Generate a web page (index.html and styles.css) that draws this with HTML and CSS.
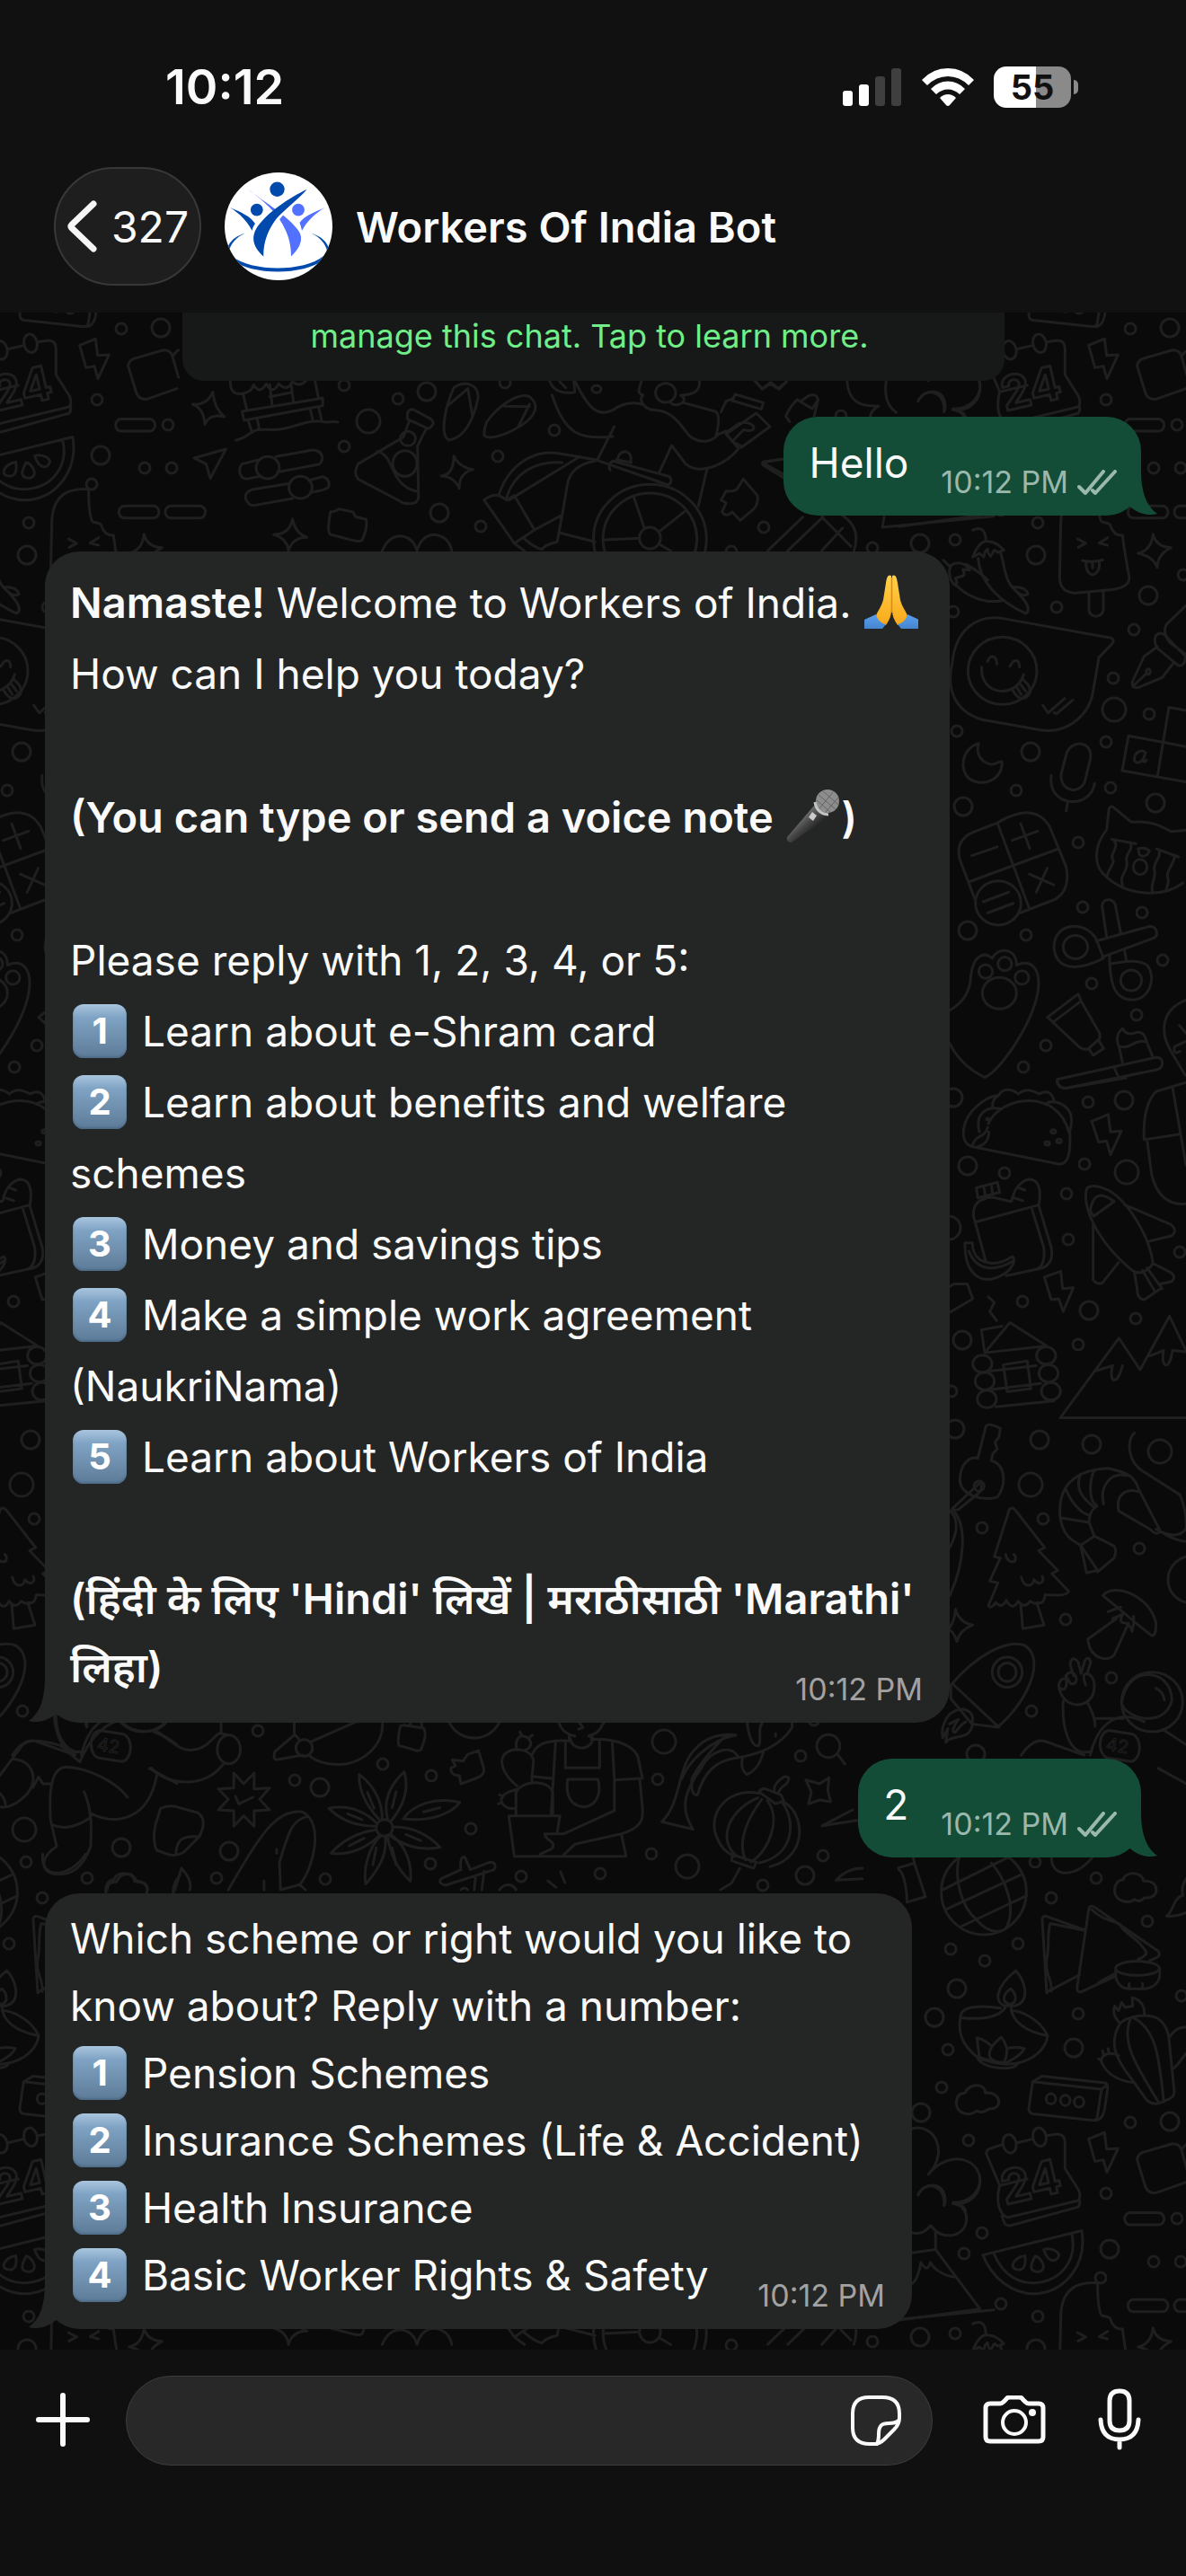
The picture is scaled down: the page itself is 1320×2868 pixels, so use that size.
FILE: index.html
```html
<!DOCTYPE html>
<html lang="en">
<head>
<meta charset="utf-8">
<meta name="viewport" content="width=device-width, initial-scale=1">
<title>Workers Of India Bot</title>
<link rel="stylesheet" href="styles.css">
</head>
<body>
<div class="app">
  <header class="top">
    <div class="status">
      <time class="clock">10:12</time>
      <div class="indicators">
        <svg class="signal" width="66" height="42" viewBox="0 0 66 42" role="img" aria-label="Signal 2 of 4">
          <g fill="#fff"><rect x="0" y="25" width="11" height="17" rx="3"/><rect x="18" y="18" width="11" height="24" rx="3"/></g>
          <g fill="#3f3f3f"><rect x="36" y="9" width="11" height="33" rx="3"/><rect x="54" y="0" width="11" height="42" rx="3"/></g>
        </svg>
        <svg class="wifi" width="58" height="42" viewBox="0 0 58 42" role="img" aria-label="Wi-Fi" fill="#fff">
          <path d="M0 13 Q12 0 29 0 T58 13 L52 19 Q42 9 29 9 T6 19Z"/>
          <path d="M10 23 Q18 14.500 29 14.500 T48 23 L42 29 Q36 23.500 29 23.500 T16 29Z"/>
          <path d="M20 33 Q24 29 29 29 T38 33 L31 41 Q29 43 27 41Z"/>
        </svg>
        <div class="battery"><span class="battery-level">55</span><span class="battery-nub"></span></div>
      </div>
    </div>
    <div class="contact">
      <button class="back" type="button" aria-label="Back, 327 unread">
        <svg width="34" height="58" viewBox="0 0 34 58" fill="none" stroke="#f5f5f5" stroke-width="7" stroke-linecap="round" stroke-linejoin="round"><path d="M30 4 6 27 Q4 29 6 31 L30 54"/></svg>
        <span>327</span>
      </button>
      <svg class="avatar" width="120" height="120" viewBox="0 0 120 120" role="img" aria-label="Workers of India logo">
        <clipPath id="disc"><circle cx="60" cy="60" r="60"/></clipPath>
        <g clip-path="url(#disc)">
          <rect width="120" height="120" fill="#fff"/>
          <path fill="#5271ff" d="M25.700 18.700 C46 34 76 52 84 68 C88 78 80 88 74 93.500 C74 78 70 66 61 52 C52 39 38 27 25.700 18.700Z"/>
          <path fill="#fff" d="M91.700 20.500 C76 38 62 48 58 58 L50 56 C60 40 75 28 91.700 18.700Z"/>
          <path fill="#004aad" d="M91.700 18.700 C72 28 45 46 35 63 C28 76 35 86 43.300 93.500 C43 78 48 64 58 51 C68 40 82 30 91.700 18.700Z"/>
          <path fill="#004aad" d="M6 39 C18 44 29 49 34 57 C32 60 31 62 30.500 65 C26 55 17 46 6 39Z"/>
          <path fill="#5271ff" d="M112 39 C100 44 88 49 83.500 56 C85 60 85.500 62 86 65 C91 55 100 46 112 39Z"/>
          <circle cx="58.500" cy="18.700" r="8.200" fill="#004aad"/>
          <circle cx="35.800" cy="41.700" r="6.900" fill="#004aad"/>
          <circle cx="82" cy="41.700" r="6.900" fill="#5271ff"/>
          <path fill="#004aad" d="M23 67.500 C12 71 4 77 2 88 L5 87 C7 79 13 72 23 67.500Z"/>
          <path fill="#004aad" d="M96 67.500 C107 71 115 77 117 88 L114 87 C112 79 106 72 96 67.500Z"/>
          <path fill="#004aad" d="M8 93 C30 111 88 111 110 93 L110 97 C88 115 30 115 8 97Z"/>
        </g>
      </svg>
      <h1 class="title">Workers Of India Bot</h1>
    </div>
  </header>

  <main class="chat">
    <svg class="wallpaper" aria-hidden="true">
      <defs>
        <g id="tile">
          <!-- calendar side column, lower half -->
          <g transform="translate(1000 2060) scale(.3333 .3571)">
            <ellipse cx="285" cy="130" rx="142" ry="133"/>
            <path d="M150 122 366 22M160 184 410 76M208 238 428 142M205 12C180 90 215 180 258 214C290 250 320 255 340 252M310 40C350 80 400 180 358 244"/>
            <path d="M45 0 53 40 90 145 28 162C28 100 10 60 0 60M0 55 53 40"/>
            <path d="M512 12C500 90 600 90 655 12"/>
            <path d="M750 92C755 65 815 65 818 96C875 90 875 155 822 148C810 160 798 160 788 153C770 168 725 160 722 130C720 105 735 92 750 92Z"/>
            <path d="M960 90C940 120 950 140 950 140C915 150 920 190 895 205 930 208 950 200 970 190"/>
            <path d="M495 445 480 215Q482 202 495 206L625 250M500 440 605 388M510 440C515 400 485 380 495 340C505 300 495 260 507 228L622 250M636 180 596 430Q598 445 612 441L726 392M636 180Q642 170 655 178L868 315Q876 328 862 335L838 344M645 185C680 215 700 215 738 230M738 230C760 270 790 260 828 318Q828 330 800 340M660 420C680 400 700 400 726 382"/>
            <ellipse cx="798" cy="368" rx="73" ry="22"/><path d="M725 368V395Q735 430 770 432H825Q865 425 872 395V368M770 415V430M815 415V430"/>
            <path d="M207 522C190 600 260 650 290 655C400 690 490 640 498 578C470 520 400 500 376 500M207 522C205 480 290 485 340 492M207 522C280 530 340 520 358 488M376 490C378 530 420 565 498 578M392 375C320 430 320 475 356 485H390C440 470 425 410 392 375ZM375 432C345 450 345 475 372 480C400 475 392 445 375 432ZM262 585 270 645Q310 660 360 662 410 640 420 618 390 612 362 618 355 595 343 583 325 595 312 612 290 590 262 585ZM312 612C295 640 305 655 330 660M362 618C362 640 360 650 352 660M264 645C270 680 380 690 396 668"/>
            <path d="M740 540C720 520 715 500 722 486L735 500 745 474 757 490 782 486 780 460C810 465 825 490 820 515M740 540C700 600 730 650 760 690L830 780Q850 795 872 788L905 775Q925 765 920 745L903 585C890 510 830 510 782 520 760 525 745 535 740 540ZM775 525C740 600 800 680 870 788M785 522C860 560 870 640 886 785M735 640C700 625 675 640 678 660 695 700 740 720 790 725M685 642 682 625M703 635 700 618M678 656 668 650M903 585C920 560 940 550 960 552M918 680C940 665 950 640 965 630"/>
            <path d="M222 757C235 725 290 725 290 757 345 750 350 810 303 806 290 815 275 820 262 812 240 830 195 825 193 788Q195 757 222 757Z"/>
            <path d="M448 722 435 805Q435 820 450 822L650 842Q662 842 664 830L678 745ZM448 722 480 704 690 725Q700 730 698 745L688 810Q680 840 660 842M678 745 696 732"/>
            <circle cx="509" cy="775" r="16"/><circle cx="557" cy="780" r="16"/><circle cx="603" cy="785" r="16"/>
            <path d="M45 868C120 850 170 940 100 1010C170 930 280 960 272 1040 265 1090 220 1105 182 1102C240 1105 245 1190 180 1200 140 1205 120 1185 107 1170 90 1190 70 1200 45 1192M65 1075C90 1025 160 1045 152 1108M124 1190V1245L272 1430 0 1465M45 1255 124 1245M45 1350C60 1345 70 1310 75 1285 90 1310 100 1305 107 1285 120 1310 160 1330 190 1330"/>
            <path d="M345 918 305 930Q290 935 295 950L338 1045 430 1025M395 912 450 900M495 890 530 885Q555 885 556 910V992L602 1060Q610 1085 600 1092L365 1145Q345 1140 335 1110 328 1080 338 1045M345 1140 355 1165Q362 1172 375 1170L600 1112Q608 1105 604 1088"/>
            <ellipse cx="371" cy="915" rx="22" ry="29" transform="rotate(-15 371 915)"/><ellipse cx="471" cy="894" rx="22" ry="29" transform="rotate(-15 471 894)"/>
            <path d="M635 900 688 880 695 932 733 930 696 1004 684 965 656 970ZM797 965 825 1050Q835 1072 860 1068L960 1035M797 965Q798 950 815 942L915 915Q940 915 945 935L965 1000M945 935Q955 920 965 915"/>
            <rect x="755" y="1130" width="132" height="38" rx="19"/><rect x="766" y="1401" width="134" height="38" rx="19"/><rect x="921" y="1401" width="134" height="38" rx="19"/>
            <path d="M282 1262 612 1186C630 1290 560 1370 470 1382 380 1390 310 1330 282 1262ZM318 1256C350 1330 410 1355 465 1348 540 1340 600 1280 578 1194"/>
            <path d="M422 1264C380 1270 365 1310 405 1308 425 1305 425 1280 422 1264ZM457 1265C435 1300 440 1315 470 1314 500 1305 475 1270 457 1265ZM485 1245C500 1290 530 1285 536 1262 530 1245 500 1240 485 1245Z"/>
          </g>
          <!-- lolly, chillies, chat bubble, moon, calculator, paw -->
          <g transform="translate(1040 550) scale(.3333 .4464)">
            <path d="M422 70 418 210Q420 245 470 247L600 238Q655 230 650 205 636 150 628 103 600 105 588 80 590 73 560 70 545 60 545 -12C480 -15 425 0 422 70ZM516 246V290Q518 304 540 305 563 302 564 288V242M478 112 505 123 480 133M578 109 550 122 578 128M494 166Q530 172 562 164M506 168Q505 200 530 201 555 195 550 167M528 172V184"/>
            <path d="M730 100Q740 132 790 134 745 150 744 183 730 155 680 148 725 140 730 100ZM128 90Q170 75 172 117M128 157Q150 115 180 118 210 120 232 140L210 146Q200 135 196 145L188 155Q178 150 178 137 168 140 165 157L150 148ZM146 160C150 220 220 270 305 298 330 285 290 255 270 240 230 215 235 170 220 146M70 225C100 250 160 275 225 266M105 175C140 190 160 200 178 215M55 178C80 165 105 175 118 190L95 188Q105 205 90 205L70 210Q80 225 70 228 48 215 50 190ZM262 232C300 232 310 240 312 250 290 258 280 245 270 240M30 165 50 180"/>
            <path d="M225 310 590 359Q605 365 590 376L549 408 528 500C510 560 430 600 350 588L160 563C60 540 40 480 60 420C70 340 140 300 225 310Z"/>
            <ellipse cx="227" cy="441" rx="115" ry="84"/><path d="M158 432C150 500 270 515 298 450M177 418Q185 400 202 408 210 415 208 424M252 430Q265 410 280 418 285 425 284 432M262 490Q280 515 305 508 330 495 312 475L295 462M275 482 290 500M288 475 305 492M362 527 380 546 435 510M400 545 408 548 462 514"/>
            <path d="M148 622C90 635 80 690 120 712 165 730 225 715 226 668 215 665 210 676 185 674 145 665 140 640 148 622ZM440 650C455 610 530 615 521 660L503 715C490 750 420 745 423 700ZM390 702C375 780 520 790 535 722M445 768 440 790"/>
            <path d="M840 278 775 325Q760 345 785 370L840 400M740 352Q760 340 780 360L838 405Q838 430 815 428L745 385Q730 370 740 352ZM745 381 700 405 660 470Q660 485 680 483L760 458 798 422M662 480 710 446"/><circle cx="714" cy="443" r="7"/>
            <path d="M840 540 783 532 745 703M648 603 840 630M648 603 627 690 840 718M705 645C690 635 665 645 668 665 675 675 700 670 704 645M704 645 697 665Q700 672 708 664"/>
            <path d="M210 820 125 845Q70 865 84 910L135 1010M210 820C290 785 350 785 385 830L440 930Q455 990 400 1012L285 1045M210 820 316 1032M120 966 410 886M125 902 210 880M260 864 345 841M288 822 318 884M317 948 398 975M377 933 340 993M163 1017 248 993M177 1045 263 1021"/><ellipse cx="213" cy="1020" rx="76" ry="55"/>
            <path d="M583 785Q590 775 600 783L657 818C720 815 750 825 790 842L850 838M583 785 575 837C530 880 530 930 575 955 640 1000 760 1010 830 970M592 861 672 872M742 885 815 905M600 865C620 880 580 900 598 915 595 930 580 935 576 955M655 873C665 890 635 895 642 915 650 940 615 950 628 975M750 888C760 910 725 920 735 940 740 960 720 975 728 990M802 903C800 925 770 940 780 960 785 975 770 985 775 990M680 885Q705 880 718 890 705 910 685 900Z"/><ellipse cx="687" cy="930" rx="23" ry="19"/>
            <path d="M540 1110C500 1060 400 1070 399 1130 405 1190 480 1190 565 1158ZM575 1105 560 1028Q562 1010 585 1012 600 1015 604 1025L623 1098M540 1115 720 1078Q745 1080 742 1100 740 1105 730 1108L560 1155M585 1170C590 1230 605 1260 660 1262 725 1260 740 1200 710 1175 680 1160 640 1165 585 1172ZM585 1153V1172M634 1137 642 1166"/>
            <ellipse cx="471" cy="1130" rx="41" ry="29"/><ellipse cx="657" cy="1213" rx="35" ry="26"/>
            <path d="M51 1288C100 1265 120 1240 122 1200 130 1150 165 1140 193 1158 210 1130 275 1130 274 1175 320 1160 350 1180 348 1225 340 1310 220 1440 168 1455 110 1435 70 1400 51 1370"/>
            <ellipse cx="171" cy="1191" rx="23" ry="17"/><ellipse cx="235" cy="1172" rx="23" ry="17"/><ellipse cx="292" cy="1206" rx="23" ry="17"/><ellipse cx="217" cy="1245" rx="57" ry="39"/>
            <path d="M378 1305 480 1247 490 1265 552 1345 552 1358 515 1383Q500 1388 485 1380ZM397 1317 487 1266M515 1383 530 1400 565 1383 548 1362M410 1460 740 1405Q765 1405 760 1425 755 1435 735 1437L440 1482Q405 1480 410 1460ZM600 1430 615 1455M628 1418 617 1380Q600 1350 628 1333 640 1350 665 1345 700 1335 708 1365L728 1402M620 1378C660 1385 660 1360 708 1366M840 1262C760 1285 750 1340 790 1390L838 1450M818 1325 840 1345M840 1365 802 1378 Q795 1400 820 1390"/>
          </g>
          <!-- taco, luggage, rocket, cabin, tree, prawn, astronaut -->
          <g transform="translate(1020 1200) scale(.3333 .5102)">
            <path d="M185 150C140 140 150 90 205 60 240 40 260 40 275 38 290 20 320 25 340 35 370 20 395 30 410 35 440 25 455 35 460 52 520 60 525 90 512 115 515 160 510 190 475 188ZM255 65Q250 48 275 38M240 100C280 40 470 20 510 120M210 118C195 80 230 60 285 68M187 148C200 120 225 135 238 108M205 150Q240 145 242 118M430 58Q445 50 460 53"/>
            <ellipse cx="457" cy="117" rx="8" ry="4"/><ellipse cx="437" cy="143" rx="8" ry="4"/><ellipse cx="476" cy="138" rx="8" ry="4"/><ellipse cx="238" cy="90" rx="4" ry="2"/>
            <path d="M585 95 640 80 648 118 684 116 648 168 635 138 608 140ZM427 435 482 422 488 460 524 458 490 510 475 482 450 484ZM900 10 800 30Q755 60 760 135L880 123M855 20 900 190M770 135 785 210Q810 280 900 275M470 5Q475 30 520 20L700 0"/>
            <path d="M232 402 190 300Q190 270 225 265 240 258 265 262L315 270M200 240 270 228 278 250 205 262ZM225 238 230 258M250 234 255 255M195 315 405 278M318 268C330 230 370 215 395 225 415 235 415 260 408 278L450 370Q460 405 420 415L300 432M385 285 425 370Q432 410 400 418M325 262 355 268M340 240 362 245M162 360H187C185 400 250 420 320 390 335 395 320 415 300 425 220 460 160 430 162 360ZM175 378C200 420 260 425 322 400"/>
            <path d="M570 240C550 270 590 350 720 420 740 430 770 425 790 405 780 350 710 270 640 245Q590 230 570 240ZM580 290C590 250 620 250 660 270L592 302ZM695 277 850 320Q875 335 850 345L775 357M590 320V440Q600 452 620 448L675 403M728 425 740 475Q755 490 770 480L815 460M755 420 795 465M770 415 820 460M790 405 850 425Q870 435 850 445L815 450M111 455 125 450 170 450 188 482 111 512M240 478 260 490 245 510 268 530"/>
            <path d="M217 550 285 542M217 550 228 600 312 534 435 585M228 600 435 585M245 640 400 628M250 680 415 667M265 718 460 705M290 626 370 618 382 678 303 685Z"/>
            <ellipse cx="220" cy="624" rx="32" ry="19"/><ellipse cx="228" cy="662" rx="32" ry="19"/><ellipse cx="235" cy="701" rx="32" ry="19"/><ellipse cx="433" cy="606" rx="32" ry="19"/><ellipse cx="441" cy="645" rx="32" ry="19"/><ellipse cx="449" cy="684" rx="32" ry="19"/>
            <path d="M900 742H480L676 568 747 637 845 520 900 595M597 640 655 628C640 665 670 675 688 628M780 607 825 595C815 635 845 640 855 595L900 598M205 830 232 760Q240 752 280 765L275 785 262 795 270 810 255 820 250 835C300 845 300 890 270 915 220 925 150 910 145 880 145 840 180 825 205 830ZM120 940 210 885Q225 890 210 905L140 942 111 945M111 1025C140 990 140 960 111 945M111 1130C160 1060 170 980 125 945"/><ellipse cx="209" cy="891" rx="17" ry="11"/>
            <path d="M310 942Q320 935 330 943L428 1025 408 1032 472 1075 452 1082 508 1120Q505 1132 430 1128 425 1150 405 1145 395 1150 380 1142 360 1160 340 1142 320 1165 300 1140 285 1160 265 1145 250 1160 240 1152L272 1102 245 1098 280 1048 260 1045ZM348 1148 355 1202 426 1194 403 1148M298 1040Q305 1060 328 1055 335 1045 325 1040M350 1090C360 1115 390 1110 392 1095 410 1110 430 1100 420 1088"/>
            <path d="M576 970 480 960C470 890 530 855 640 852 700 860 730 870 740 895L815 990Q800 1000 780 985L675 945M576 970C580 930 610 940 600 932M480 960C490 1000 520 1010 548 1020L594 1000 576 970M548 1020 568 1080 605 1075 548 1020M594 1000 660 1022Q670 1030 660 1048L605 1078M600 932C570 920 580 860 600 855M545 870C530 900 560 920 590 935M500 900C520 930 550 950 578 955M625 930C610 890 650 860 700 868M675 945C665 910 700 895 740 903M728 775C700 790 705 840 760 860L880 910Q905 950 900 985 870 1010 800 985M815 990Q860 1010 900 1012"/>
            <path d="M111 1200Q130 1180 130 1160 145 1190 188 1194 145 1205 135 1230 125 1210 111 1205M622 1130C660 1100 780 1130 800 1190Q800 1220 785 1217C740 1195 700 1170 622 1130ZM640 1165 682 1155M668 1180 572 1225C580 1270 640 1275 660 1260L708 1190M655 1180 690 1170Q670 1190 700 1190 715 1195 720 1208 728 1190 725 1175M900 1045C820 1060 820 1130 900 1145"/>
            <path d="M115 1325C200 1260 300 1225 360 1238 440 1270 360 1370 270 1417L185 1410 115 1355ZM120 1322 275 1417M185 1410C200 1380 150 1370 120 1385 100 1390 80 1420 88 1440L105 1420 98 1450C120 1430 180 1450 188 1408M110 1410 140 1400Q110 1430 130 1428 150 1410 165 1405"/>
            <ellipse cx="303" cy="1297" rx="50" ry="33"/><ellipse cx="303" cy="1297" rx="30" ry="20"/>
            <path d="M490 1360C485 1420 510 1470 560 1472L585 1470M572 1365Q595 1390 597 1415M475 1325C480 1370 560 1385 590 1345 600 1320 590 1305 570 1300L582 1275Q575 1260 562 1272L550 1300 540 1275Q520 1258 513 1280L525 1305M475 1325Q480 1308 500 1312 505 1325 495 1333 480 1338 475 1325ZM498 1305Q515 1290 532 1305 540 1325 515 1322ZM565 1325Q550 1300 570 1300M350 1478Q390 1440 430 1448L560 1478M580 1478C610 1400 680 1380 760 1405M597 1398H690M825 1423 900 1455M808 1507 900 1540"/>
            <ellipse cx="787" cy="1362" rx="102" ry="65"/><path d="M685 1365C700 1280 850 1285 853 1358 830 1420 700 1400 685 1365ZM800 1332Q825 1340 828 1358"/>
            <rect x="613" y="1428" width="132" height="60" rx="30" transform="rotate(6 679 1458)"/>
          </g>
          <!-- pier, slippers, flask, wheelchair -->
          <g transform="translate(0 340) scale(.5612 .3333)">
            <path d="M457 250Q455 300 480 295 500 290 503 265 515 300 528 262 540 300 553 262 570 290 580 255 595 275 608 250M482 295 490 352M535 265 540 335M577 260 582 322M625 255 632 312M535 305 580 290M480 354 640 310V335L484 384ZM492 384 500 425M510 378 514 412M615 345 620 380M632 340 638 385M468 450C500 440 490 410 530 415 580 420 600 380 640 388 650 395 660 385 670 390"/>
            <path d="M382 330Q410 335 422 290 425 345 445 372 415 360 406 398 405 345 382 330ZM385 510 448 480 417 578 409 530ZM875 570Q900 565 900 503 910 540 938 548 910 560 911 612 900 570 875 570ZM543 765Q575 765 580 713 585 760 609 775 580 775 572 820 570 780 543 765Z"/>
            <path d="M515 515 480 530Q470 550 480 575 485 582 495 578L518 570M548 505 620 483Q640 485 639 515 636 530 630 532L550 557M575 595 500 615Q480 630 490 655 495 670 505 668L580 645M612 585 640 572Q655 580 652 605 650 615 615 625"/><ellipse cx="531" cy="542" rx="23" ry="37"/><ellipse cx="596" cy="608" rx="23" ry="37"/>
            <path d="M808 360Q812 345 820 348L855 380Q865 395 850 412L808 380ZM812 385 800 440 710 530Q700 560 710 580L800 660Q828 670 830 640L828 470 845 412M748 488C785 500 770 600 828 622"/><ellipse cx="809" cy="445" rx="15" ry="24"/><ellipse cx="803" cy="528" rx="24" ry="43"/>
            <path d="M900 275C920 250 950 260 948 310 940 380 920 445 890 450 870 430 885 330 900 275ZM928 278 888 335M928 278 937 370M965 390C990 330 1030 290 1050 305 1070 330 1065 370 1030 405 1000 435 970 450 960 435Q960 410 965 390ZM1050 330 1028 405M1000 337 1050 338"/>
            <path d="M655 690Q665 690 672 680L700 690 705 706 726 715Q730 740 718 785 710 790 700 785L655 765Q650 755 652 730ZM758 820Q770 770 795 770 820 775 827 820 835 770 860 766 890 770 896 820"/>
            <path d="M1090 252Q1100 300 1140 290L1138 252M1110 255 1122 275M1140 252C1160 320 1180 380 1215 350 1240 320 1260 325 1272 330M1272 252C1270 275 1260 290 1275 300 1265 320 1280 350 1300 350 1340 350 1360 430 1370 440 1390 460 1410 460 1425 430L1440 420M1095 300C1120 430 1150 450 1215 438M1218 405 1185 515M1355 325 1420 355Q1430 370 1420 435M1387 252C1390 290 1370 300 1350 300 1370 320 1340 345 1330 325M1430 355 1440 320 1455 310M1458 297 1514 325 1510 347 1452 318ZM1440 430 1500 360 1527 405 1470 475M1440 425 1465 395Q1485 385 1495 405 1495 425 1475 415M1475 415 1452 455 1470 470M1440 430 1465 478C1440 530 1390 570 1360 530L1332 468 1307 560M1402 548 1385 670M1498 252 1512 280 1527 262 1545 280 1560 255"/>
            <ellipse cx="1320" cy="292" rx="20" ry="32"/><ellipse cx="1183" cy="280" rx="9" ry="12"/><ellipse cx="1289" cy="777" rx="21" ry="36"/><ellipse cx="1289" cy="780" rx="93" ry="153"/><ellipse cx="1289" cy="780" rx="112" ry="182"/>
            <path d="M990 630C1010 530 1060 480 1110 495L1180 515 1325 600Q1335 590 1328 572L1215 520Q1205 530 1210 550M1010 650 1150 505M1005 640C1020 560 1060 520 1115 525M1180 520C1150 530 1130 550 1125 600L1115 700 1105 790Q1080 800 1075 815M960 650Q975 630 990 635L1005 650 1020 635 1060 750 1115 700M960 650 1020 795 1060 750M1020 795 1040 820M1040 780Q1060 810 1075 815M1110 760 1180 790M1257 640 1278 745M1358 688 1308 755M1200 783 1268 778M1308 798 1330 820M1225 520Q1225 490 1240 488 1255 495 1250 525M1222 515 1252 525M1430 650 1440 620Q1460 625 1465 605L1474 580 1502 635Q1505 660 1495 680L1468 718 1452 690Q1440 710 1432 690L1440 660ZM1545 515 1512 525 1565 575"/>
          </g>
          <g transform="translate(660 0) scale(.4209 .4082)">
            <path d="M428 1040 447 1060 470 1043 490 1060 512 1040M540 1090Q520 1110 510 1135L520 1150M540 1090 580 1115 592 1095M548 1095 570 1080Q590 1070 595 1090L585 1135M672 1040C675 1090 700 1110 755 1107Q735 1120 733 1136M775 1040C770 1080 780 1110 802 1125M862 1090C880 1055 940 1060 930 1120M1022 1040C1030 1080 1000 1115 952 1115 980 1120 985 1136 985 1136M505 1252 450 1260Q445 1268 455 1272L504 1303M770 1410 765 1438 1060 1408M462 1502 555 1410M515 1502 608 1410M605 1502 660 1440M605 1410 682 1490M660 1406Q710 1440 690 1502"/>
          </g>
          <!-- band under the first reply -->
          <g transform="translate(0 1880) scale(.6122 .3333)">
            <path d="M102 85C100 180 130 220 150 210M158 105V128M145 245C160 180 180 130 215 105M145 245 110 190C70 170 50 170 40 190L0 290M22 235C60 240 70 300 50 350 30 390 10 400 0 395M0 350Q10 370 10 390M60 330 70 295 78 318H92M103 527 92 440C88 330 95 265 120 262 160 265 210 310 232 363M153 345C170 420 165 480 165 527 150 600 130 625 100 620 70 610 75 560 103 527M95 455Q125 480 163 432M163 415C210 460 270 440 285 290M275 265C300 320 370 340 407 250M402 105V150L415 155M218 105C240 155 290 155 305 105M280 145C310 160 320 210 350 205 380 200 390 150 402 148"/>
            <ellipse cx="416" cy="203" rx="21" ry="48"/><ellipse cx="553" cy="198" rx="15" ry="28"/>
            <path d="M535 105V155L500 210Q495 240 505 237L550 222M655 105 565 178M695 105C700 200 650 260 610 253 580 250 565 230 562 222M537 155 545 172M815 105C830 180 890 190 910 105M748 105 745 122M765 105 767 125M735 122 770 132Q778 150 765 205 760 212 745 200L725 190Q722 170 728 125Z"/>
            <path d="M425 282 443 318 462 282V335L490 332 472 370 490 405 462 408V460L443 425 425 460V408L397 405 415 370 397 335 425 332ZM428 360 434 385 460 363M292 400Q310 385 330 400L360 415Q378 440 362 495L335 545Q320 565 300 550L285 540Q275 500 285 440ZM320 555C320 500 335 490 362 495"/>
            <path d="M415 672C470 500 500 400 550 412 590 450 570 600 545 655L510 672 508 580C525 480 530 440 558 428M545 655 555 672M480 642V672M503 536V550M318 672 330 600Q350 640 345 672M195 672Q195 645 212 645 218 615 238 620 250 640 247 645 268 645 268 672"/>
            <ellipse cx="699" cy="465" rx="15" ry="28"/><path d="M690 438C665 390 652 340 653 287 685 330 695 390 695 438M705 438C695 370 710 320 735 278 745 340 730 400 710 445M683 460C650 460 620 440 598 400 640 385 670 420 685 450M684 472C650 480 620 510 602 550 640 560 675 520 690 490M714 462C750 460 780 490 800 530 760 545 730 520 708 490M733 435C750 390 790 360 836 380 820 420 780 445 733 435ZM693 490C670 530 660 600 665 653 690 600 705 550 700 492M704 490C710 550 720 600 746 643 750 580 735 520 712 490M668 347 680 400M720 345 713 398M632 418 658 438M635 525 662 500M738 487 765 508M684 532 678 588M713 532 720 588M770 412 800 398"/>
            <path d="M822 238 842 242 850 220 870 207 880 270Q880 290 865 300L838 318 835 290Q818 290 820 265L828 258ZM838 605Q835 560 845 563L855 605 890 580Q905 580 898 605L810 657Q795 650 802 635ZM880 610 876 672M865 625 862 672M908 672Q915 655 925 655 935 660 938 672M838 672Q845 660 850 672M996 642 1011 664M1019 612 1027 648"/>
            <path d="M940 325C910 280 910 240 915 225 930 190 965 200 970 240L967 300V315M938 425V350C945 305 1000 300 1005 350V420M942 335 925 345Q908 360 912 380 920 405 938 400M940 205Q935 175 945 160 960 155 965 180 965 200 955 205M945 145 950 158M968 155 962 165M908 355 915 360M906 385 913 380M925 425H1018L1013 480M925 425 935 560H1138L1130 488M1013 485H990Q992 500 1000 508 1010 520 1003 535L982 553M1025 555 1045 520 1130 485C1165 465 1170 440 1168 400L1163 300 1117 305V408L1025 485H1013M968 220C975 180 1000 170 1035 175V155M1075 155V170C1130 165 1155 200 1160 230L1168 300M967 293 1002 300M1010 178 1002 420M1113 178 1117 305M1028 178V265H1090V178M1036 165C1040 210 1075 210 1078 165M1032 303H1087C1095 360 1080 395 1060 395 1035 390 1028 350 1032 303ZM1015 105Q1020 150 1045 158M1103 105 1095 120Q1090 150 1070 158M1050 105 1060 130 1052 135"/>
            <path d="M1260 470 1203 445C1240 380 1230 260 1265 200 1285 160 1310 150 1338 155 1290 170 1250 250 1240 300M1260 470C1235 400 1245 340 1275 265 1290 210 1330 180 1342 230 1380 220 1420 190 1440 130V105M1342 230C1300 240 1280 280 1268 355Q1255 360 1258 300 1275 240 1320 155M1358 105C1360 160 1370 200 1380 190 1385 160 1375 130 1390 105M1388 210Q1380 270 1358 287 1345 270 1350 230M1410 150V160M1380 345Q1385 330 1395 337L1420 355 1425 375 1410 385ZM1408 340Q1405 320 1425 295 1440 290 1430 318 1415 335 1415 352M1380 350C1330 330 1290 400 1300 480 1310 540 1325 550 1335 560M1378 365C1330 400 1300 500 1340 560M1385 370C1360 430 1340 510 1355 572M1395 375C1420 430 1400 540 1365 580M1422 380C1450 450 1440 560 1380 582M1422 378C1460 400 1475 560 1400 595M1332 555 1375 580 1370 600 1330 575ZM1345 600 1330 650 1310 672M1465 305 1490 318 1507 298 1505 340 1510 378 1490 372 1470 385 1475 345ZM1523 220 1536 252M1495 458 1550 405M1495 458 1558 440M1520 640Q1540 600 1568 600M1520 640 1568 635"/><ellipse cx="1506" cy="192" rx="21" ry="38"/>
          </g>
          <g class="dots">
            <circle cx="1063" cy="601" r="6"/><circle cx="1153" cy="618" r="10"/><circle cx="1155" cy="582" r="6"/><circle cx="1176" cy="676" r="6"/><circle cx="1061" cy="681" r="6"/><circle cx="1278" cy="663" r="10"/><circle cx="1317" cy="640" r="6"/><circle cx="1262" cy="701" r="6"/><circle cx="1239" cy="755" r="6"/><circle cx="1240" cy="790" r="13"/><circle cx="1279" cy="795" r="6"/><circle cx="1065" cy="814" r="6"/><circle cx="1147" cy="837" r="10"/><circle cx="1231" cy="826" r="6"/><circle cx="1131" cy="880" r="6"/><circle cx="1236" cy="877" r="6"/><circle cx="1072" cy="898" r="10"/><circle cx="1286" cy="894" r="10"/><circle cx="1200" cy="938" r="6"/><circle cx="1205" cy="1010" r="6"/><circle cx="1271" cy="1016" r="6"/><circle cx="1077" cy="1036" r="10"/><circle cx="1142" cy="1041" r="6"/><circle cx="1294" cy="1069" r="6"/><circle cx="1215" cy="1095" r="6"/><circle cx="1265" cy="1130" r="6"/><circle cx="1164" cy="1164" r="6"/><circle cx="1139" cy="1188" r="6"/><circle cx="1061" cy="1222" r="10"/><circle cx="1211" cy="1227" r="6"/><circle cx="1251" cy="1225" r="10"/>
            <circle cx="1077" cy="1298" r="10"/><circle cx="1118" cy="1306" r="6"/><circle cx="1207" cy="1296" r="6"/><circle cx="1254" cy="1305" r="13"/><circle cx="1187" cy="1329" r="6"/><circle cx="1056" cy="1367" r="13"/><circle cx="1189" cy="1380" r="6"/><circle cx="1313" cy="1394" r="6"/><circle cx="1138" cy="1449" r="6"/><circle cx="1212" cy="1459" r="10"/><circle cx="1264" cy="1468" r="6"/><circle cx="1071" cy="1492" r="10"/><circle cx="1200" cy="1497" r="6"/><circle cx="1059" cy="1549" r="6"/><circle cx="1063" cy="1591" r="10"/><circle cx="1157" cy="1603" r="10"/><circle cx="1215" cy="1608" r="10"/><circle cx="1291" cy="1616" r="13"/><circle cx="1147" cy="1653" r="13"/><circle cx="1161" cy="1691" r="6"/><circle cx="1093" cy="1701" r="6"/><circle cx="1268" cy="1724" r="6"/><circle cx="1186" cy="1803" r="6"/><circle cx="1237" cy="1868" r="6"/><circle cx="1148" cy="1905" r="6"/><circle cx="1086" cy="1953" r="10"/>
            <circle cx="1152" cy="2073" r="6"/><circle cx="1220" cy="2091" r="6"/><circle cx="1170" cy="2113" r="6"/><circle cx="1277" cy="2139" r="6"/><circle cx="1058" cy="2170" r="6"/><circle cx="1133" cy="2164" r="6"/><circle cx="1096" cy="2183" r="6"/><circle cx="1065" cy="2214" r="10"/><circle cx="1040" cy="2246" r="10"/><circle cx="1200" cy="2242" r="6"/><circle cx="1315" cy="2222" r="6"/><circle cx="1055" cy="2282" r="6"/><circle cx="1195" cy="2280" r="10"/><circle cx="1048" cy="2324" r="6"/><circle cx="1025" cy="2352" r="10"/><circle cx="1302" cy="2362" r="10"/><circle cx="1258" cy="2363" r="6"/><circle cx="1078" cy="2383" r="6"/><circle cx="1231" cy="2442" r="6"/><circle cx="1093" cy="2486" r="6"/><circle cx="1073" cy="2509" r="6"/><circle cx="1235" cy="2504" r="10"/><circle cx="1310" cy="2470" r="6"/><circle cx="1284" cy="2518" r="6"/><circle cx="1314" cy="2518" r="6"/><circle cx="1225" cy="2536" r="6"/><circle cx="1114" cy="2565" r="6"/><circle cx="1024" cy="2602" r="10"/>
            <circle cx="383" cy="429" r="6"/><circle cx="475" cy="436" r="10"/><circle cx="443" cy="444" r="6"/><circle cx="410" cy="469" r="13"/><circle cx="383" cy="497" r="6"/><circle cx="554" cy="508" r="6"/><circle cx="617" cy="479" r="6"/><circle cx="489" cy="571" r="10"/><circle cx="535" cy="586" r="6"/><circle cx="850" cy="587" r="6"/><circle cx="562" cy="426" r="6"/><circle cx="936" cy="463" r="6"/><circle cx="971" cy="610" r="6"/><circle cx="814" cy="614" r="6"/>
            <circle cx="287" cy="1927" r="6"/><circle cx="426" cy="1964" r="6"/><circle cx="328" cy="1982" r="6"/><circle cx="356" cy="1990" r="10"/><circle cx="480" cy="1977" r="6"/><circle cx="27" cy="2037" r="13"/><circle cx="135" cy="2057" r="10"/><circle cx="255" cy="2061" r="10"/><circle cx="524" cy="2036" r="6"/><circle cx="241" cy="2091" r="6"/><circle cx="362" cy="2092" r="6"/><circle cx="479" cy="2075" r="6"/><circle cx="580" cy="2089" r="6"/><circle cx="668" cy="2086" r="6"/><circle cx="725" cy="2064" r="6"/><circle cx="765" cy="2078" r="13"/><circle cx="732" cy="1981" r="6"/><circle cx="739" cy="1939" r="13"/><circle cx="891" cy="1955" r="6"/><circle cx="916" cy="2066" r="6"/><circle cx="896" cy="2088" r="10"/><circle cx="849" cy="2099" r="6"/><circle cx="906" cy="1915" r="6"/>
          </g>
          <text class="num-big" x="1114" y="2447" transform="rotate(-13 1150 2430)">24</text>
          <text class="num-small" x="1231" y="1951" transform="rotate(10 1246 1944)">42</text>
        </g>
      </defs>
      <g class="doodles" transform="translate(0 -348)">
        <use href="#tile"/><use href="#tile" x="-1123"/>
        <use href="#tile" y="-1997"/><use href="#tile" x="-1123" y="-1997"/>
        <use href="#tile" y="1997"/><use href="#tile" x="-1123" y="1997"/>
      </g>
    </svg>

    <a class="notice" href="#learn-more">manage this chat. Tap to learn more.</a>

    <article class="bubble out">
      <p class="text">Hello</p>
      <div class="meta"><time>10:12 PM</time>
        <svg class="ticks" width="44" height="28" viewBox="0 0 44 28" role="img" aria-label="Delivered"><path d="M2 19 9 26 29 2M17 23 20 26 42 2"/></svg>
      </div>
      <svg class="tail" width="36" height="50" viewBox="0 0 36 50" aria-hidden="true"><path d="M0 0H18C18 22 23 39 36 48 25 51 14 47 7 41L0 36Z"/></svg>
    </article>

    <article class="bubble in welcome">
      <div class="text roomy">
        <p><b>Namaste!</b> Welcome to Workers of India. <svg class="emoji" width="60" height="60" viewBox="0 0 60 60" role="img" aria-label="Folded hands">
          <defs>
            <linearGradient id="skin" x1="0" y1="0" x2="0" y2="1"><stop offset="0" stop-color="#ffd24a"/><stop offset="1" stop-color="#f9a91b"/></linearGradient>
            <linearGradient id="cuff" x1="0" y1="0" x2="0" y2="1"><stop offset="0" stop-color="#5aa0ee"/><stop offset="1" stop-color="#4585d0"/></linearGradient>
          </defs>
          <path fill="url(#skin)" d="M30 1C26-1 25 3 24 9L21 28C19 36 14 41 13 46 14 52 19 56 24 56 28 50 30 45 30 40Z"/>
          <path fill="url(#skin)" d="M31 1C35-1 36 3 37 9L40 28C42 36 47 41 48 46 47 52 42 56 37 56 33 50 31 45 31 40Z"/>
          <path d="M30.500 3V42" stroke="#d98b12" stroke-width="1.500"/>
          <path fill="url(#cuff)" d="M0 50 13 44Q15 53 24 55L20 60H0ZM61 50 48 44Q46 53 37 55L41 60H61Z"/>
        </svg><br>How can I help you today?</p>
        <p><b>(You can type or send a voice note <svg class="emoji" width="60" height="60" viewBox="0 0 60 60" role="img" aria-label="Microphone">
          <defs><linearGradient id="barrel" x1="0" y1="0" x2="1" y2="1"><stop offset="0.300" stop-color="#777"/><stop offset="0.500" stop-color="#444"/><stop offset="0.700" stop-color="#1c1c1c"/></linearGradient></defs>
          <path fill="url(#barrel)" d="M31 18 1 53Q0 59 6 59L46 31Z"/>
          <path fill="#ccc" d="M29 25 34 29 30 35 25 31Z"/>
          <ellipse cx="46" cy="13" rx="13" ry="13" fill="#8d8d8d"/>
          <path d="M32 14Q34 27 47 28" stroke="#c4c4c4" stroke-width="3" fill="none"/>
          <path d="M36 6 55 22M41 2 58 17M34 12 49 25M37 21 52 3M44 25 58 9" stroke="#666" stroke-width="1"/>
        </svg>)</b></p>
        <div>
          <p>Please reply with 1, 2, 3, 4, or 5:</p>
          <ul>
            <li><span class="key">1</span> Learn about e-Shram card</li>
            <li><span class="key">2</span> Learn about benefits and welfare schemes</li>
            <li><span class="key">3</span> Money and savings tips</li>
            <li><span class="key">4</span> Make a simple work agreement (NaukriNama)</li>
            <li><span class="key">5</span> Learn about Workers of India</li>
          </ul>
        </div>
        <p class="hindi" lang="hi"><b>(हिंदी के लिए 'Hindi' लिखें | मराठीसाठी 'Marathi'<br>लिहा)</b></p>
      </div>
      <div class="meta"><time>10:12 PM</time></div>
      <svg class="tail" width="36" height="50" viewBox="0 0 36 50" aria-hidden="true"><path d="M0 0H18C18 22 23 39 36 48 25 51 14 47 7 41L0 36Z"/></svg>
    </article>

    <article class="bubble out">
      <p class="text">2</p>
      <div class="meta"><time>10:12 PM</time>
        <svg class="ticks" width="44" height="28" viewBox="0 0 44 28" role="img" aria-label="Delivered"><path d="M2 19 9 26 29 2M17 23 20 26 42 2"/></svg>
      </div>
      <svg class="tail" width="36" height="50" viewBox="0 0 36 50" aria-hidden="true"><path d="M0 0H18C18 22 23 39 36 48 25 51 14 47 7 41L0 36Z"/></svg>
    </article>

    <article class="bubble in schemes">
      <div class="text">
        <p>Which scheme or right would you like to know about? Reply with a number:</p>
        <ul>
          <li><span class="key">1</span> Pension Schemes</li>
          <li><span class="key">2</span> Insurance Schemes (Life &amp; Accident)</li>
          <li><span class="key">3</span> Health Insurance</li>
          <li><span class="key">4</span> Basic Worker Rights &amp; Safety</li>
        </ul>
      </div>
      <div class="meta"><time>10:12 PM</time></div>
      <svg class="tail" width="36" height="50" viewBox="0 0 36 50" aria-hidden="true"><path d="M0 0H18C18 22 23 39 36 48 25 51 14 47 7 41L0 36Z"/></svg>
    </article>
  </main>

  <footer class="composer">
    <button class="icon" type="button" aria-label="Attach"><svg width="60" height="60" viewBox="0 0 60 60"><path d="M30 3V57M3 30H57" stroke-width="6"/></svg></button>
    <div class="field">
      <input type="text" aria-label="Message">
      <button class="icon" type="button" aria-label="Stickers"><svg width="56" height="56" viewBox="0 0 56 56"><path stroke-width="4" d="M20 2H35Q54 2 54 20V25C54 31 52 34 48 38L37 49C33 53 30 54 25 54H21Q2 54 2 36V20Q2 2 20 2ZM29 54C31 50 31 47 31 43 31 34 34 31 42 31 46 31 50 31 53 28"/></svg></button>
    </div>
    <button class="icon" type="button" aria-label="Camera"><svg width="70" height="54" viewBox="0 0 70 54"><path stroke-width="5" d="M8 9H19C21 9 22 8 23 7L26 4Q27 2 30 2H40Q43 2 44 4L47 7C48 8 49 9 51 9H62Q67 9 67 14V46Q67 51 62 51H8Q3 51 3 46V14Q3 9 8 9Z"/><circle cx="35" cy="30" r="13" stroke-width="4"/><circle cx="55" cy="19" r="4" fill="#fafafa" stroke="none"/></svg></button>
    <button class="icon mic" type="button" aria-label="Voice message"><svg width="48" height="70" viewBox="0 0 48 70"><path stroke-width="5" d="M24 3Q35 3 35 14V36Q35 47 24 47T13 36V14Q13 3 24 3Z"/><path stroke-width="5" d="M3 35Q4 57 24 57T45 35M24 58V66"/></svg></button>
  </footer>
</div>
</body>
</html>
```

FILE: styles.css
```css
* { box-sizing: border-box; }

body {
  margin: 0;
  background: #101010;
  color: #fafafa;
  font-family: Inter, "Liberation Sans", "Noto Sans Devanagari", "Noto Sans", sans-serif;
  font-size: 46px;
}

h1, p, ul { margin: 0; padding: 0; }
ul { list-style: none; }
b { font-size: 47px; font-weight: 600; }
svg { display: block; flex: none; }
button { border: 0; padding: 0; background: none; color: inherit; font: inherit; }

.app { display: flex; flex-direction: column; min-height: 100vh; }

/* Status bar and contact header */
.top { padding: 66px 128px 30px 60px; background: #111; }
.status { display: flex; justify-content: space-between; align-items: center; height: 62px; }
.clock { padding-left: 124px; font-size: 54px; line-height: 60px; font-weight: 600; }
.indicators { display: flex; align-items: center; gap: 22px; }
.battery {
  position: relative;
  width: 86px;
  height: 46px;
  border-radius: 14px;
  background: linear-gradient(90deg, #fff 55%, #8a8a8a 55%);
  color: #111;
}
.battery-level { display: block; text-align: center; font-size: 38px; line-height: 46px; font-weight: 700; }
.battery-nub { position: absolute; right: -8px; top: 15px; width: 5px; height: 16px; border-radius: 0 5px 5px 0; background: #8a8a8a; }

.contact { display: flex; align-items: center; height: 132px; margin-top: 58px; }
.back {
  display: flex;
  align-items: center;
  justify-content: center;
  gap: 16px;
  width: 164px;
  height: 132px;
  margin-right: 26px;
  border: 2px solid #383838;
  border-radius: 66px;
  background: #1e1e1e;
  font-size: 48px;
}
.title { margin-left: 26px; font-size: 47px; font-weight: 600; }

/* Conversation */
.chat {
  position: relative;
  display: flex;
  flex-direction: column;
  gap: 40px;
  padding: 0 50px 23px;
  overflow: hidden;
  background: #0a0a0a;
}
.wallpaper { position: absolute; inset: 0; width: 100%; height: 100%; }
.doodles { fill: none; stroke: #1f1f1f; stroke-width: 3; stroke-linecap: round; stroke-linejoin: round; }
#tile * { vector-effect: non-scaling-stroke; }
.num-big { font-size: 52px; font-weight: 700; }
.num-small { font-size: 20px; font-weight: 400; stroke-width: 1; }

.notice {
  position: relative;
  align-self: center;
  width: 75%;
  padding: 0 24px 24px 16px;
  border-radius: 0 0 24px 24px;
  background: #161918;
  color: #70ee87;
  font-size: 36px;
  line-height: 52px;
  text-align: center;
  text-decoration: none;
}

.bubble {
  position: relative;
  display: grid;
  width: fit-content;
  border-radius: 38px;
}
.bubble > .text, .bubble > .meta { grid-row: 1; }
.text { line-height: 75px; }
.meta {
  display: flex;
  align-items: center;
  gap: 10px;
  align-self: end;
  justify-self: end;
  font-size: 34px;
  line-height: 40px;
}
.tail { position: absolute; bottom: 0; }

.out {
  align-self: flex-end;
  grid-template-columns: auto auto;
  column-gap: 36px;
  padding: 14px 27px 0 28px;
  background: #144d37;
}
.out .text { padding-bottom: 21px; }
.out .meta { padding-bottom: 17px; color: #9ab8ab; }
.out .tail { right: -18px; fill: #144d37; }
.ticks { fill: none; stroke: currentColor; stroke-width: 4; stroke-linecap: round; stroke-linejoin: round; }

.in {
  padding: 0 20px 17px 28px;
  background: #242625;
}
.in > .text, .in > .meta { grid-column: 1; }
.in > .text { padding: 13px 0 5px; }
.in .meta { padding-right: 10px; color: #a1a2a1; }
.in .tail { left: -18px; transform: scaleX(-1); fill: #242625; }
.welcome { max-width: 1007px; }
.schemes { max-width: 965px; }

.roomy { display: grid; gap: 80px; line-height: 79px; }
.in > .roomy { padding: 17px 0 7px; }
.hindi { line-height: 75px; }

.emoji { display: inline-block; margin: 0 2px; vertical-align: -12px; }
.key {
  display: inline-block;
  overflow: hidden;
  width: 60px;
  height: 60px;
  margin: 0 4px 0 3px;
  border-radius: 12px;
  background: linear-gradient(#a9c5de, #7fa3c4 25%, #6f90ae 60%, #5c7b98);
  box-shadow: inset 0 -2px 2px #4f6c88;
  color: #fff;
  font-size: 40px;
  font-weight: 700;
  line-height: 60px;
  text-align: center;
  vertical-align: -13px;
}

/* Message composer */
.composer {
  display: flex;
  align-items: flex-start;
  gap: 40px;
  flex: 1;
  padding: 29px 50px 60px 40px;
  background: #101010;
}
.icon { display: flex; align-items: center; height: 98px; }
.icon svg { fill: none; stroke: #fafafa; stroke-linecap: round; stroke-linejoin: round; }
.field {
  display: flex;
  align-items: center;
  flex: 1;
  height: 100px;
  margin-right: 16px;
  padding: 0 34px 0 40px;
  border: 1px solid #3c3c3c;
  border-radius: 50px;
  background: #282828;
}
.field input { flex: 1; min-width: 0; border: 0; outline: 0; background: none; color: inherit; font: inherit; }
.mic { margin-left: 18px; }
```
